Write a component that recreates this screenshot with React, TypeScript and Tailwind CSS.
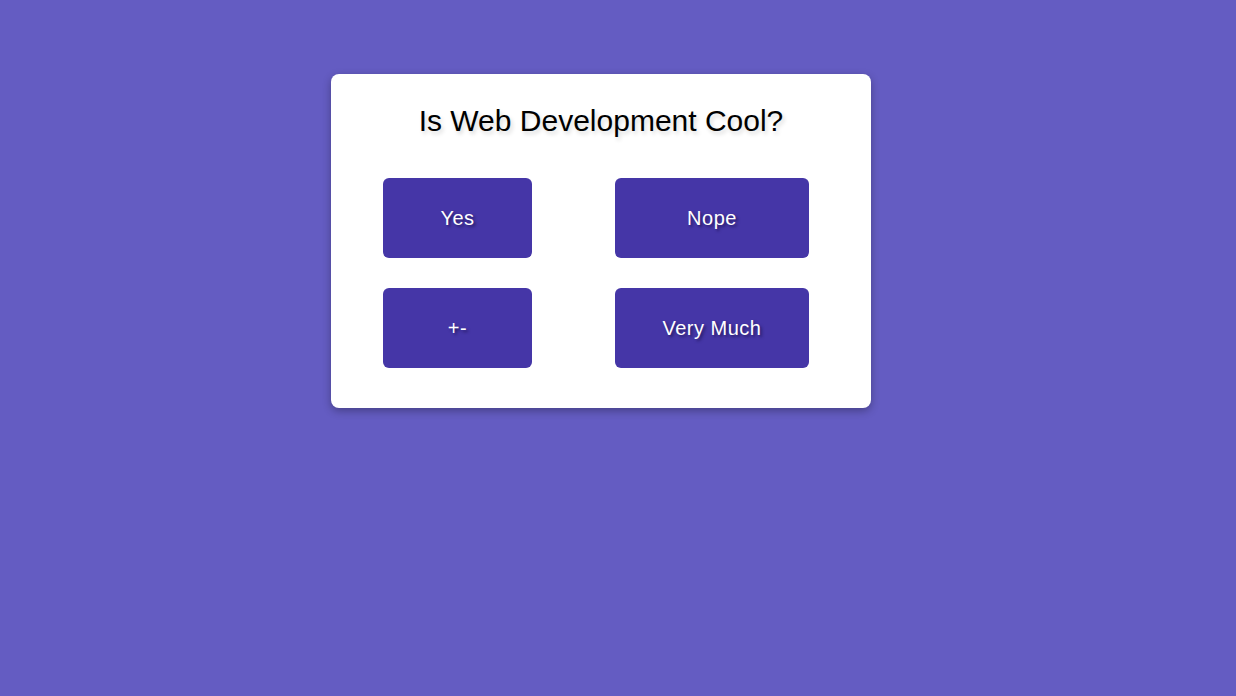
import React from "react";

const answers = [
  { label: "Yes", w: "w-[149px]" },
  { label: "Nope", w: "w-[194px]" },
  { label: "+-", w: "w-[149px]" },
  { label: "Very Much", w: "w-[194px]" },
];

export default function App() {
  return (
    <div className="min-h-screen bg-[#645cc2] flex justify-center pr-[34px] pt-[74px] font-['Liberation_Sans',Arial,sans-serif]">
      <div className="w-[540px] h-[334px] bg-white rounded-lg shadow-[0_3px_8px_rgba(0,0,0,0.3)] flex flex-col items-center pt-[27px]">
        <h1 className="text-[30px] leading-[40px] text-black [text-shadow:2px_3px_4px_rgba(0,0,0,0.15)]">
          Is Web Development Cool?
        </h1>
        {/* answers */}
        <div className="grid grid-cols-[149px_194px] gap-x-[83px] gap-y-[30px] mt-[37px] mr-[10px]">
          {answers.map((a) => (
            <button
              key={a.label}
              className={`${a.w} h-[80px] rounded-md bg-[#4536a7] text-white text-[20px] tracking-[0.5px] [text-shadow:2px_2px_3px_rgba(20,10,60,0.6)]`}
            >
              {a.label}
            </button>
          ))}
        </div>
      </div>
    </div>
  );
}
